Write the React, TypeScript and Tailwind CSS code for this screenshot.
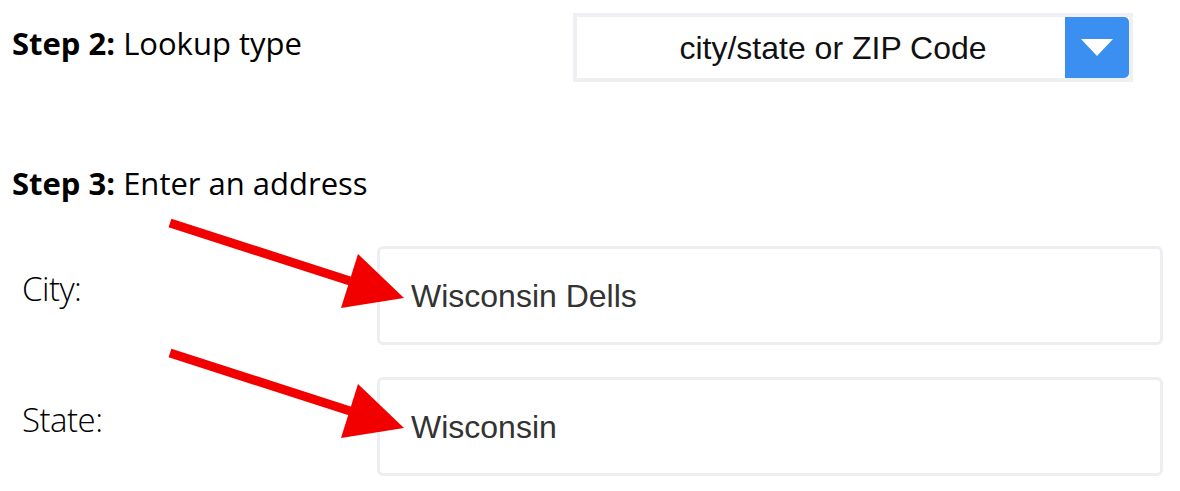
import React from "react";

export default function App() {
  return (
    <div className="relative w-[1180px] h-[491px] bg-white overflow-hidden" style={{ fontFamily: '"Open Sans", sans-serif' }}>
      <div className="flex flex-col pl-[12px] pt-[13px]">
        <div className="flex items-start">
          <div className="w-[561px] pt-[12px] text-[31px] leading-[36px] text-black font-normal">
            <span className="font-bold">Step 2:</span> Lookup type
          </div>
          <div className="flex w-[560px] h-[69px] border-[4px] border-[#eef0f3] bg-white">
            <div className="flex-1 flex items-center justify-center pl-[24px] text-[32px] text-[#111]" style={{ fontFamily: '"Liberation Sans", Arial, sans-serif' }}>
              city/state or ZIP Code
            </div>
            <div className="w-[64px] h-full bg-[#3a8ff0] rounded-r-[5px] flex items-center justify-center">
              <svg width="32" height="17" viewBox="0 0 32 17">
                <polygon points="0,0 32,0 16,17" fill="white" />
              </svg>
            </div>
          </div>
        </div>
        <div className="mt-[83px] text-[31px] leading-[36px] text-black font-normal">
          <span className="font-bold">Step 3:</span> Enter an address
        </div>
        <div className="flex flex-col gap-[32px] mt-[45px] pl-[10px]">
          <div className="flex items-center">
            <div className="w-[355px] pb-[14px] text-[33px] tracking-[-0.5px] text-black font-light">City:</div>
            <div className="w-[786px] h-[99px] border-[3px] border-[#eceef1] rounded-[6px] flex items-center pl-[31px] text-[32px] text-[#333]" style={{ fontFamily: '"Liberation Sans", Arial, sans-serif' }}>
              Wisconsin Dells
            </div>
          </div>
          <div className="flex items-center">
            <div className="w-[355px] pb-[14px] text-[33px] tracking-[-0.5px] text-black font-light">State:</div>
            <div className="w-[786px] h-[99px] border-[3px] border-[#eceef1] rounded-[6px] flex items-center pl-[31px] text-[32px] text-[#333]" style={{ fontFamily: '"Liberation Sans", Arial, sans-serif' }}>
              Wisconsin
            </div>
          </div>
        </div>
      </div>
      <svg className="absolute left-0 top-0 pointer-events-none" width="1180" height="491" viewBox="0 0 1180 491">
        <g fill="#f20000">
          <polygon points="171.4,218.7 351.4,276.7 348.6,285.3 168.6,227.3" />
          <polygon points="358,254 404,298 341,308" />
          <polygon points="171.4,348.7 351.4,406.7 348.6,415.3 168.6,357.3" />
          <polygon points="358,384 404,428 341,438" />
        </g>
      </svg>
    </div>
  );
}
